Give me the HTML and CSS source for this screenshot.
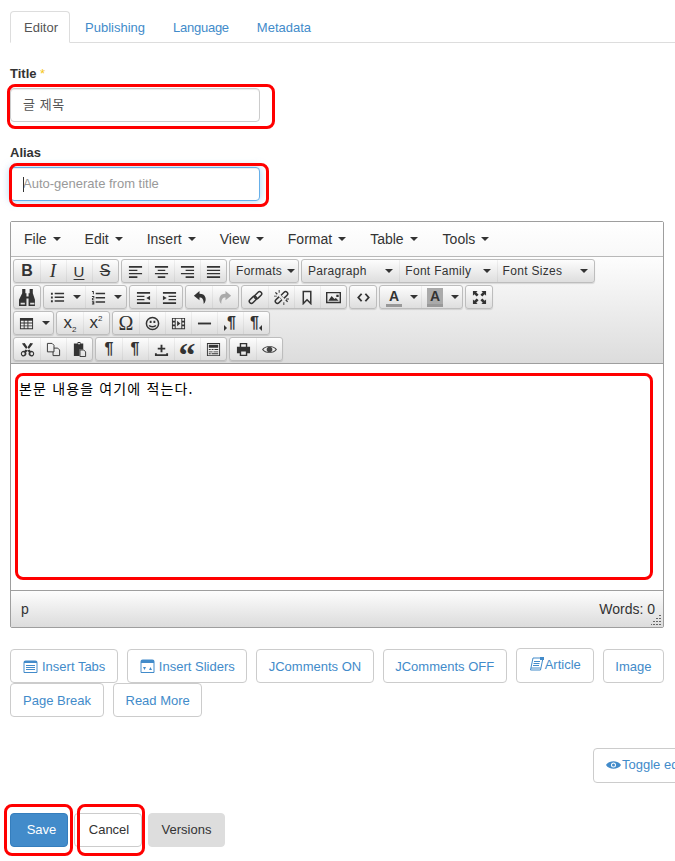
FILE: index.html
```html
<!DOCTYPE html>
<html lang="en">
<head>
<meta charset="utf-8">
<title>Editor</title>
<link rel="stylesheet" href="styles.css">
</head>
<body>
<div class="page">
  <nav class="tabs">
    <a class="tab tab-active">Editor</a>
    <a class="tab">Publishing</a>
    <a class="tab tab-tight">Language</a>
    <a class="tab">Metadata</a>
  </nav>

  <label class="label">Title <span class="star">*</span></label>
  <div class="field">
    <input class="input input-ko" type="text" value="글 제목">
    <span class="mark mark-title"></span>
  </div>

  <label class="label">Alias</label>
  <div class="field">
    <input class="input input-focus" type="text" placeholder="Auto-generate from title">
    <span class="caret"></span>
    <span class="mark mark-alias"></span>
  </div>

  <section class="editor">
    <div class="menubar">
      <span class="menu">File<i class="tri"></i></span>
      <span class="menu">Edit<i class="tri"></i></span>
      <span class="menu">Insert<i class="tri"></i></span>
      <span class="menu">View<i class="tri"></i></span>
      <span class="menu">Format<i class="tri"></i></span>
      <span class="menu menu-table">Table<i class="tri"></i></span>
      <span class="menu menu-tools">Tools<i class="tri"></i></span>
    </div>
    <div class="toolbar">
      <div class="tb-row">
        <div class="group">
          <span class="btn glyph g-b">B</span>
          <span class="btn glyph g-i">I</span>
          <span class="btn glyph g-u">U</span>
          <span class="btn glyph g-s">S</span>
        </div>
        <div class="group">
          <span class="btn"><svg class="ic" viewBox="0 0 16 16"><path d="M1 2h14v2H1zM1 6h9v1.500H1zM1 9.500h14V11H1zM1 13h9v2H1z"/></svg></span>
          <span class="btn"><svg class="ic" viewBox="0 0 16 16"><path d="M1 2h14v2H1zM4 6h8v1.500H4zM1 9.500h14V11H1zM4 13h8v2H4z"/></svg></span>
          <span class="btn"><svg class="ic" viewBox="0 0 16 16"><path d="M1 2h14v2H1zM6 6h9v1.500H6zM1 9.500h14V11H1zM6 13h9v2H6z"/></svg></span>
          <span class="btn"><svg class="ic" viewBox="0 0 16 16"><path d="M1 2h14v2H1zM1 6h14v1.500H1zM1 9.500h14V11H1zM1 13h14v2H1z"/></svg></span>
        </div>
        <div class="group">
          <span class="btn list list-formats">Formats<i class="tri tri-sm"></i></span>
        </div>
        <div class="group">
          <span class="btn list list-wide">Paragraph<i class="tri tri-sm"></i></span>
          <span class="btn list list-wide">Font Family<i class="tri tri-sm"></i></span>
          <span class="btn list list-wide">Font Sizes<i class="tri tri-sm"></i></span>
        </div>
      </div>

      <div class="tb-row">
        <div class="group">
          <span class="btn"><svg class="ic ic-tall" viewBox="0 0 16 16"><path d="M3 0h3v4h1v3h2V4h1V0h3v4l2 6v6H9v-7H7v7H0v-6l3-6z"/><path class="light" d="M1.500 13h4v1.500h-4zM10.500 13h4v1.500h-4z"/></svg></span>
        </div>
        <div class="group">
          <span class="btn btn-split"><svg class="ic" viewBox="0 0 16 16"><path d="M1 3h2v2H1zM1 7h2v2H1zM1 11h2v2H1zM5 3h10v1.500H5zM5 7h10v1.500H5zM5 11h10v1.500H5z"/></svg><i class="tri tri-sm"></i></span>
          <span class="btn btn-split"><svg class="ic" viewBox="0 0 16 16"><path d="M1 1h2v3.500H2V2H1zM1 6.500h2.500V9H2v1h1.500v1H1V8.500h1.500v-1H1zM1 12h2.500v3.500H1v-1h1.500V14H1.500v-.8h1V13H1zM5 3h10v1.500H5zM5 7.500h10V9H5zM5 12h10v1.500H5z"/></svg><i class="tri tri-sm"></i></span>
        </div>
        <div class="group">
          <span class="btn"><svg class="ic" viewBox="0 0 16 16"><path d="M1 2h14v2H1zM1 6h8v1.500H1zM1 9.500h8V11H1zM1 13h14v2H1zM15 6v5l-4-2.500z"/></svg></span>
          <span class="btn"><svg class="ic" viewBox="0 0 16 16"><path d="M1 2h14v2H1zM7 6h8v1.500H7zM7 9.500h8V11H7zM1 13h14v2H1zM1 6v5l4-2.500z"/></svg></span>
        </div>
        <div class="group">
          <span class="btn"><svg class="ic" viewBox="0 0 16 16"><path d="M8 1 2 6l6 5V8c3 0 4.500 2 4.500 7 2-2 2.500-5 1.800-7C13.500 5 11 4 8 4z"/></svg></span>
          <span class="btn"><svg class="ic ic-muted" viewBox="0 0 16 16"><path d="M8 1l6 5-6 5V8c-3 0-4.500 2-4.500 7-2-2-2.500-5-1.800-7C2.500 5 5 4 8 4z"/></svg></span>
        </div>
        <div class="group">
          <span class="btn"><svg class="ic" viewBox="0 0 16 16"><g class="stroke"><rect x="3" y="6" width="4.500" height="9" rx="2.250" transform="rotate(45 5.250 10.500)"/><rect x="8.500" y="1" width="4.500" height="9" rx="2.250" transform="rotate(45 10.750 5.500)"/></g></svg></span>
          <span class="btn"><svg class="ic" viewBox="0 0 16 16"><g class="stroke"><rect x="3" y="6" width="4.500" height="9" rx="2.250" transform="rotate(45 5.250 10.500)"/><rect x="8.500" y="1" width="4.500" height="9" rx="2.250" transform="rotate(45 10.750 5.500)"/></g><path class="cut" d="M5 5l6 6"/><path d="M1 3l1-1 2 2-1 1zM12 11l1-1 2 2-1 1zM5 0h1v3H5zM0 6h3v1H0zM13 9h3v1h-3zM10 13h1v3h-1z"/></svg></span>
          <span class="btn"><svg class="ic" viewBox="0 0 16 16"><path class="stroke" d="M3.500 1.500h8v13l-4-4-4 4z"/></svg></span>
          <span class="btn"><svg class="ic" viewBox="0 0 16 16"><path fill-rule="evenodd" d="M0 2h16v12H0zM1.500 3.500v9h13v-9z"/><path d="M2.500 11.500 6 6.500l3 3 1.500-1 3 3zM11 5h2.500v2.500H11z"/></svg></span>
        </div>
        <div class="group">
          <span class="btn"><svg class="ic" viewBox="0 0 16 16"><path class="stroke stroke-2" d="M6 4 2.500 8 6 12M10 4l3.500 4L10 12"/></svg></span>
        </div>
        <div class="group">
          <span class="btn btn-split"><span class="color-a">A</span><i class="tri tri-sm"></i></span>
          <span class="btn btn-split"><span class="color-a color-bg">A</span><i class="tri tri-sm"></i></span>
        </div>
        <div class="group">
          <span class="btn"><svg class="ic" viewBox="0 0 16 16"><path d="M1 1h5L4.500 2.500 7 5 5 7 2.500 4.500 1 6zM15 1v5l-1.500-1.500L11 7 9 5l2.500-2.500L10 1zM1 15v-5l1.500 1.500L5 9l2 2-2.500 2.500L6 15zM15 15h-5l1.500-1.500L9 11l2-2 2.500 2.500L15 10z"/></svg></span>
        </div>
      </div>

      <div class="tb-row">
        <div class="group">
          <span class="btn btn-table"><svg class="ic" viewBox="0 0 16 16"><path fill-rule="evenodd" d="M1 2h14v12H1zM2 5v2h3V5zM6 5v2h3V5zM10 5v2h4V5zM2 8v2h3V8zM6 8v2h3V8zM10 8v2h4V8zM2 11v2h3v-2zM6 11v2h3v-2zM10 11v2h4v-2z"/></svg><i class="tri tri-sm"></i></span>
        </div>
        <div class="group">
          <span class="btn glyph g-x"><span>x<sub>2</sub></span></span>
          <span class="btn glyph g-x"><span>x<sup>2</sup></span></span>
        </div>
        <div class="group">
          <span class="btn glyph g-omega">Ω</span>
          <span class="btn"><svg class="ic" viewBox="0 0 16 16"><circle class="stroke" cx="8" cy="8" r="6.500"/><path d="M5 5h2v2.500H5zM9 5h2v2.500H9z"/><path class="stroke" d="M4.500 10c1 2 6 2 7 0"/></svg></span>
          <span class="btn"><svg class="ic" viewBox="0 0 16 16"><path fill-rule="evenodd" d="M1 2h14v12H1zM2 3v2h2V3zM2 7v2h2V7zM2 11v2h2v-2zM12 3v2h2V3zM12 7v2h2V7zM12 11v2h2v-2zM5 3v10h6V3z"/><path d="M6.500 5v6L10 8z"/></svg></span>
          <span class="btn"><svg class="ic" viewBox="0 0 16 16"><path d="M1 7h14v2H1z"/></svg></span>
          <span class="btn glyph g-p g-ltr">¶</span>
          <span class="btn glyph g-p g-rtl">¶</span>
        </div>
      </div>

      <div class="tb-row">
        <div class="group">
          <span class="btn"><svg class="ic" viewBox="0 0 16 16"><path d="M2 1l4.500 6L8 5l-3-4.500zM14 1 9.500 7 8 5l3-4.500z" transform="translate(0 .5)"/><path fill-rule="evenodd" d="M6 8 4.500 9.500A3 3 0 1 0 6.500 11L8 9.500 9.500 11a3 3 0 1 0 2-1.500L10 8 8 9zM3.500 11a1.500 1.500 0 1 1 0 3 1.500 1.500 0 0 1 0-3zM12.500 11a1.500 1.500 0 1 1 0 3 1.500 1.500 0 0 1 0-3z"/></svg></span>
          <span class="btn"><svg class="ic" viewBox="0 0 16 16"><path class="stroke stroke-1" d="M1.500 1.500h5l2 2v7h-7zM8.500 6.500h4l2 2v6h-7v-4"/></svg></span>
          <span class="btn"><svg class="ic" viewBox="0 0 16 16"><path d="M6 0h3v1.500h3V8H8v7H2V1.500h4z"/><path class="light" d="M6.500 1h2v1.500h-2z"/><path class="stroke stroke-1" d="M8.500 8.500h4l2 2v5h-6z"/></svg></span>
        </div>
        <div class="group">
          <span class="btn glyph g-p">¶</span>
          <span class="btn glyph g-p">¶</span>
          <span class="btn"><svg class="ic" viewBox="0 0 16 16"><path d="M7 3h2v3h3v2H9v3H7V8H4V6h3zM1 12h2v1h10v-1h2v3H1z"/></svg></span>
          <span class="btn glyph g-quote">“</span>
          <span class="btn"><svg class="ic" viewBox="0 0 16 16"><path fill-rule="evenodd" d="M1 1h14v14H1zM2 2v12h12V2z"/><path d="M3 3h10v3H3zM3 7.500h2v1H3zM6 7.500h2v1H6zM9 7.500h4v1H9zM3 10h4v1H3zM8 10h5v1H8zM3 12h2v1H3zM6 12h7v1H6z"/></svg></span>
        </div>
        <div class="group">
          <span class="btn"><svg class="ic" viewBox="0 0 16 16"><path fill-rule="evenodd" d="M4 1h8v4h3v7h-3v3H4v-3H1V5h3zM5.500 2.500V5h5V2.500zM5.500 10v3.500h5V10z"/></svg></span>
          <span class="btn"><svg class="ic ic-eye" viewBox="0 0 16 16"><path fill-rule="evenodd" d="M0 8c3-5 13-5 16 0-3 5-13 5-16 0zM1.500 8c3 3.800 10 3.800 13 0-3-3.800-10-3.800-13 0z"/><circle cx="8" cy="8" r="3"/></svg></span>
        </div>
      </div>
    </div>

    <div class="content">
      <p class="content-text">본문 내용을 여기에 적는다.</p>
      <span class="mark mark-body"></span>
    </div>

    <div class="status">
      <span>p</span>
      <span class="words">Words: 0</span>
      <svg class="grip" viewBox="0 0 10 10"><path d="M8 0h2v1H8zM8 3h2v1H8zM5 3h2v1H5zM8 6h2v1H8zM5 6h2v1H5zM2 6h2v1H2zM8 9h2v1H8zM5 9h2v1H5zM2 9h2v1H2zM0 9h1v1H0z"/></svg>
    </div>
  </section>

  <div class="ext-buttons">
    <a class="link-btn"><svg class="btn-ic" viewBox="0 0 15 15"><path class="blue-stroke" d="M1 3.500C1 2.500 1.500 2 2.500 2h10c1 0 1.500.5 1.500 1.500v10H1z"/><path class="blue-fill" d="M1 2h13v2H1zM3 6h9v1H3zM3 8h9v1H3zM3 10h9v1H3z"/></svg>Insert Tabs</a>
    <a class="link-btn link-btn-narrow"><svg class="btn-ic" viewBox="0 0 15 15"><path class="blue-stroke" d="M1 2.500C1 1.500 1.500 1 2.500 1h10c1 0 1.500.5 1.500 1.500v11H1z"/><path class="blue-fill" d="M1 1h13v3H1zM3 8h3L4.500 11zM9 11h3l-1.500-3z"/></svg>Insert Sliders</a>
    <a class="link-btn link-btn-narrow">JComments ON</a>
    <a class="link-btn link-btn-narrow">JComments OFF</a>
    <a class="link-btn link-btn-tall"><svg class="btn-ic btn-ic-tight" viewBox="0 0 15 15"><path class="blue-stroke" d="M4 1h10l-2.500 12H1.500zM2 11h9.500"/><path class="blue-fill" d="M5 4h6v1H5zM4.500 6h6v1h-6zM4 8h6v1H4zM11 0h4v3h-4z"/></svg>Article</a>
    <a class="link-btn link-btn-narrow">Image</a>
    <a class="link-btn link-btn-page">Page Break</a>
    <a class="link-btn link-btn-narrow">Read More</a>
  </div>

  <div class="toggle-row">
    <a class="link-btn link-btn-tall toggle"><svg class="btn-ic btn-ic-tight" viewBox="0 0 15 15"><path class="blue-fill" fill-rule="evenodd" d="M0 8c3-5 12-5 15 0-3 5-12 5-15 0zM7.500 5.500a2.500 2.500 0 1 0 0 5 2.500 2.500 0 0 0 0-5z"/><circle class="blue-fill" cx="7.500" cy="8" r="1.500"/></svg>Toggle editor</a>
  </div>

  <div class="actions">
    <a class="action action-save">Save<span class="mark mark-save"></span></a>
    <a class="action action-cancel">Cancel<span class="mark mark-cancel"></span></a>
    <a class="action action-versions">Versions</a>
  </div>
</div>
</body>
</html>
```

FILE: styles.css
```css
* { box-sizing: border-box; }
html, body { margin: 0; padding: 0; background: #fff; }
.page {
  width: 675px;
  height: 861px;
  overflow: hidden;
  padding-left: 10px;
  font-family: "Liberation Sans", Arial, "Noto Sans CJK KR", sans-serif;
  font-size: 13px;
  color: #333;
}

/* Tabs */
.tabs {
  display: flex;
  height: 43px;
  padding-top: 11px;
  border-bottom: 1px solid #ddd;
}
.tab {
  height: 32px;
  padding: 0 14px;
  line-height: 33px;
  color: #428bca;
}
.tab-tight { letter-spacing: -0.25px; }
.tab-active {
  width: 60px;
  margin-right: 1px;
  padding: 0 13px;
  color: #555;
  background: #fff;
  border: 1px solid #ddd;
  border-bottom-color: #fff;
  border-radius: 4px 4px 0 0;
  line-height: 31px;
}

/* Form */
.label {
  display: block;
  height: 18px;
  margin: 22px 0 5px;
  line-height: 18px;
  font-weight: 700;
  font-size: 13px;
}
.star { color: #f5c518; font-weight: 400; }
.field { position: relative; width: 250px; height: 34px; }
.input {
  display: block;
  width: 250px;
  height: 34px;
  padding: 0 12px 1px;
  border: 1px solid #ccc;
  border-radius: 4px;
  font-family: "Liberation Sans", Arial, "Noto Sans CJK KR", sans-serif;
  font-size: 13px;
  color: #555;
  box-shadow: inset 0 1px 1px rgba(0, 0, 0, .075);
  outline: none;
}
.input-ko { letter-spacing: 0.6px; padding-bottom: 3px; }
.input-focus {
  border-color: #66afe9;
  box-shadow: inset 0 1px 1px rgba(0, 0, 0, .075), 0 0 8px rgba(102, 175, 233, .6);
}
.input::placeholder { color: #999; opacity: 1; }
.caret {
  position: absolute;
  left: 13px;
  top: 10px;
  width: 1px;
  height: 15px;
  background: #333;
}

/* Red annotation frames */
.mark {
  position: absolute;
  border: 3px solid #f00;
  border-radius: 8px;
  pointer-events: none;
}
.mark-title { left: -3px; right: -15px; top: -4px; bottom: -7px; }
.mark-alias { left: -1px; right: -9px; top: -4px; bottom: -6px; }
.mark-body { left: 4px; right: 10px; top: 9px; bottom: 10px; }
.mark-save { left: -7px; right: -6px; top: -10px; bottom: -10px; }
.mark-cancel { left: 2px; right: -4px; top: -10px; bottom: -10px; }

/* Editor */
.editor {
  width: 654px;
  height: 407px;
  margin-top: 20px;
  display: flex;
  flex-direction: column;
  border: 1px solid #9e9e9e;
  border-radius: 2px;
}
.menubar {
  height: 35px;
  flex: none;
  display: flex;
  align-items: center;
  padding-left: 1px;
  background: linear-gradient(#fff, #f8f8f8);
  border-bottom: 1px solid #b8b8b8;
}
.menu {
  display: flex;
  align-items: center;
  padding: 0 12px;
  font-size: 14px;
  color: #333;
}
.menu-tools { margin-left: 1px; }
.tri {
  width: 0;
  height: 0;
  margin-left: 6px;
  border: 4px solid transparent;
  border-top-color: #333;
  border-bottom-width: 0;
}
.toolbar {
  height: 107px;
  flex: none;
  padding: 2px 0 0 2px;
  display: flex;
  flex-direction: column;
  gap: 2px;
  background: linear-gradient(#fdfdfd, #dcdcdc);
  border-bottom: 1px solid #9e9e9e;
}
.tb-row { display: flex; gap: 2px; height: 24px; }
.group {
  display: flex;
  height: 24px;
  border: 1px solid #bdbdbd;
  border-radius: 3px;
  background: linear-gradient(#fdfdfd, #dedede);
  box-shadow: 0 1px 1px rgba(0, 0, 0, .12);
}
.btn {
  position: relative;
  display: flex;
  align-items: center;
  justify-content: center;
  width: 26px;
  height: 22px;
  color: #333;
}
.btn + .btn { box-shadow: inset 1px 0 0 rgba(0, 0, 0, .05); }
.btn-split { width: 41px; justify-content: flex-start; padding-left: 6px; }
.btn-table { width: 39px; justify-content: flex-start; padding-left: 5px; }
.ic { display: block; width: 15px; height: 15px; fill: #333; flex: none; }
.ic-tall { width: 17px; height: 17px; }
.ic-muted { fill: #aaa; }
.ic-eye { fill: #444; }
.light { fill: #ddd; }
.stroke { fill: none; stroke: #333; stroke-width: 1.6; }
.stroke-1 { stroke-width: 1; }
.stroke-2 { stroke-width: 2; }
.cut { fill: none; stroke: #e8e8e8; stroke-width: 2.500; }
.tri-sm { margin-left: 8px; }
.list {
  justify-content: flex-start;
  padding-left: 6px;
  font-size: 12px;
  letter-spacing: 0.3px;
  white-space: nowrap;
}
.list .tri { position: absolute; right: 6px; top: 9px; margin: 0; }
.list-formats { width: 68px; }
.list-formats .tri { right: 3px; }
.list-wide { width: 97.300px; }

.glyph { font-family: "Liberation Sans", Arial, sans-serif; }
.g-b { font-size: 16px; font-weight: 700; }
.g-i { font-family: "Liberation Serif", serif; font-size: 19px; font-style: italic; }
.g-u { font-size: 15px; text-decoration: underline; text-underline-offset: 2px; }
.g-s { font-size: 16px; text-decoration: line-through; }
.g-x { font-size: 17px; }
.g-x sub, .g-x sup { font-size: 8px; line-height: 0; }
.g-omega { font-family: "Liberation Serif", serif; font-size: 20px; }
.g-p { font-size: 16px; font-weight: 700; }
.g-ltr::before, .g-rtl::after {
  content: "";
  border: 3px solid transparent;
  margin-top: 9px;
}
.g-ltr::before { border-left-color: #333; border-right-width: 0; }
.g-rtl::after { border-right-color: #333; border-left-width: 0; }
.g-quote { font-family: "Liberation Serif", serif; font-size: 34px; font-weight: 700; line-height: 1; padding-top: 12px; }
.color-a {
  display: block;
  width: 16px;
  height: 19px;
  font-size: 14px;
  font-weight: 700;
  line-height: 16px;
  text-align: center;
  border-bottom: 3px solid #999;
}
.color-bg { background: #aaa; }

/* Content */
.content {
  position: relative;
  flex: 1;
  padding: 15px 8px 0;
  background: #fff;
}
.content-text {
  margin: 0;
  font-family: "Noto Sans CJK KR", sans-serif;
  font-size: 14px;
  line-height: 18px;
  color: #000;
  word-spacing: 1px;
  letter-spacing: 1.1px;
}

/* Status */
.status {
  position: relative;
  height: 37px;
  flex: none;
  display: flex;
  justify-content: space-between;
  align-items: center;
  padding: 0 8px 0 10px;
  font-size: 14px;
  background: linear-gradient(#fdfdfd, #dcdcdc);
  border-top: 1px solid #9e9e9e;
}
.grip {
  position: absolute;
  right: 2px;
  bottom: 2px;
  width: 10px;
  height: 10px;
  fill: #666;
}

/* Plugin buttons */
.ext-buttons {
  display: flex;
  flex-wrap: wrap;
  column-gap: 9px;
  width: 665px;
  margin-top: 21px;
}
.link-btn {
  display: flex;
  align-items: center;
  justify-content: center;
  height: 34px;
  padding: 0 12px;
  border: 1px solid #ccc;
  border-radius: 4px;
  background: #fff;
  color: #428bca;
  font-size: 13px;
  white-space: nowrap;
}
.link-btn-narrow { padding: 0 11.5px; }
.link-btn-page { width: 94px; }
.link-btn-tall { height: 35px; margin-top: -1px; padding-bottom: 2px; }
.btn-ic { width: 15px; height: 15px; margin-right: 4px; flex: none; }
.btn-ic-tight { margin-right: 1px; }
.blue-stroke { fill: none; stroke: #428bca; stroke-width: 1; }
.blue-fill { fill: #428bca; }

.toggle-row {
  display: flex;
  margin-top: 31px;
  padding-left: 583px;
}
.toggle { flex: none; margin-top: 0; }

/* Actions */
.actions { display: flex; gap: 6px; margin-top: 30px; }
.action {
  position: relative;
  display: flex;
  align-items: center;
  justify-content: center;
  height: 34px;
  padding-bottom: 2px;
  border: 1px solid #ccc;
  border-radius: 4px;
  font-size: 13px;
  color: #333;
}
.action-save { width: 58px; padding-left: 5px; background: #428bca; border-color: #357ebd; color: #fff; }
.action-cancel { width: 68px; padding-left: 2px; background: #fff; }
.action-versions { width: 77px; background: #ddd; border-color: #ddd; }
```
